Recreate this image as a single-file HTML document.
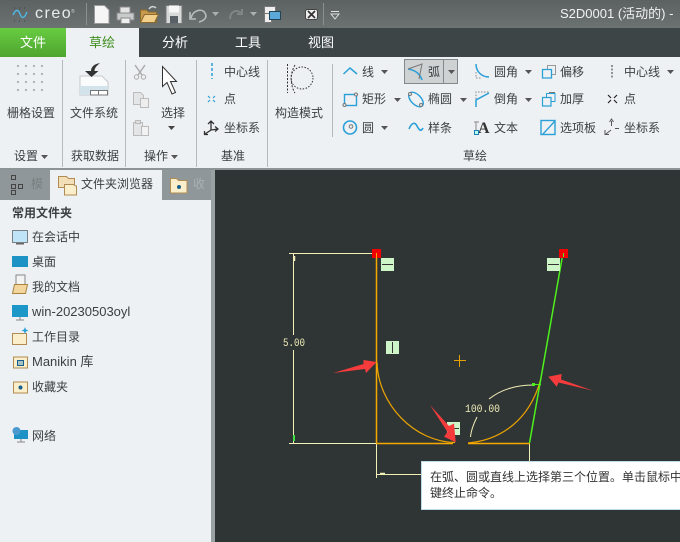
<!DOCTYPE html>
<html><head><meta charset="utf-8"><style>
html,body{margin:0;padding:0}
body{width:680px;height:542px;overflow:hidden;position:relative;background:#2f3535;font-family:"Liberation Sans","Noto Sans CJK SC",sans-serif;font-size:12px;color:#3b4042}
.a{position:absolute}
.t{position:absolute;white-space:nowrap;line-height:16px;height:16px}
.w{color:#fff;font-size:13px}
svg{position:absolute;left:0;top:0}
</style></head><body>
<div class="a" style="left:0;top:0;width:680px;height:28px;background:linear-gradient(#5c6262,#6c7272)"></div>
<div class="a" style="left:0;top:28px;width:680px;height:29px;background:#3d4547"></div>
<div class="a" style="left:0;top:28px;width:66px;height:29px;background:linear-gradient(#68cc42,#4ea52f)"></div>
<div class="a" style="left:66px;top:28px;width:73px;height:29px;background:#eef1f3"></div>
<div class="a" style="left:0;top:57px;width:680px;height:111px;background:#eef1f3"></div>
<div class="a" style="left:0;top:168px;width:680px;height:2px;background:#8d9496"></div>
<div class="a" style="left:0;top:170px;width:211px;height:372px;background:#eef1f3"></div>
<div class="a" style="left:211px;top:170px;width:4px;height:372px;background:#9aa1a3"></div>
<div class="a" style="left:0;top:170px;width:50px;height:30px;background:#90979a"></div>
<div class="a" style="left:162px;top:170px;width:49px;height:30px;background:#90979a"></div>
<div class="a" style="left:404px;top:59px;width:54px;height:25px;background:#cfd2d3;border:1px solid #83888a;box-sizing:border-box"></div>
<div class="a" style="left:443px;top:59px;width:1px;height:25px;background:#83888a"></div>

<span class="t" style="left:35px;top:6px;color:#e8ecec;font-size:16px;letter-spacing:1.5px">creo</span>
<span class="t" style="left:71px;top:9px;color:#ccc;font-size:5px;line-height:6px;height:6px">®</span>
<span class="t" style="left:560px;top:6px;color:#f2f2f2;font-size:13px">S2D0001 (活动的) -</span>
<span class="t w" style="left:20px;top:35px">文件</span>
<span class="t w" style="left:89px;top:35px;color:#3f8f1f">草绘</span>
<span class="t w" style="left:162px;top:35px">分析</span>
<span class="t w" style="left:235px;top:35px">工具</span>
<span class="t w" style="left:308px;top:35px">视图</span>

<span class="t" style="left:7px;top:105px">栅格设置</span>
<span class="t" style="left:70px;top:105px">文件系统</span>
<span class="t" style="left:161px;top:105px">选择</span>
<span class="t" style="left:224px;top:64px">中心线</span>
<span class="t" style="left:224px;top:91px">点</span>
<span class="t" style="left:224px;top:120px">坐标系</span>
<span class="t" style="left:275px;top:105px">构造模式</span>
<span class="t" style="left:14px;top:148px">设置</span>
<span class="t" style="left:71px;top:148px">获取数据</span>
<span class="t" style="left:144px;top:148px">操作</span>
<span class="t" style="left:221px;top:148px">基准</span>
<span class="t" style="left:463px;top:148px">草绘</span>

<span class="t" style="left:362px;top:64px">线</span>
<span class="t" style="left:428px;top:64px">弧</span>
<span class="t" style="left:494px;top:64px">圆角</span>
<span class="t" style="left:560px;top:64px">偏移</span>
<span class="t" style="left:624px;top:64px">中心线</span>
<span class="t" style="left:362px;top:91px">矩形</span>
<span class="t" style="left:428px;top:91px">椭圆</span>
<span class="t" style="left:494px;top:91px">倒角</span>
<span class="t" style="left:560px;top:91px">加厚</span>
<span class="t" style="left:624px;top:91px">点</span>
<span class="t" style="left:362px;top:120px">圆</span>
<span class="t" style="left:428px;top:120px">样条</span>
<span class="t" style="left:494px;top:120px">文本</span>
<span class="t" style="left:560px;top:120px">选项板</span>
<span class="t" style="left:624px;top:120px">坐标系</span>

<span class="t" style="left:31px;top:176px;color:#7a8082">模</span>
<span class="t" style="left:81px;top:176px">文件夹浏览器</span>
<span class="t" style="left:193px;top:176px;color:#aab0b2">收</span>
<span class="t" style="left:12px;top:205px;font-weight:bold">常用文件夹</span>
<span class="t" style="left:32px;top:229px">在会话中</span>
<span class="t" style="left:32px;top:254px">桌面</span>
<span class="t" style="left:32px;top:279px">我的文档</span>
<span class="t" style="left:32px;top:304px;font-size:13px">win-20230503oyl</span>
<span class="t" style="left:32px;top:329px">工作目录</span>
<span class="t" style="left:32px;top:354px;font-size:13px">Manikin 库</span>
<span class="t" style="left:32px;top:379px">收藏夹</span>
<span class="t" style="left:32px;top:428px">网络</span>

<svg width="680" height="542" viewBox="0 0 680 542" fill="none">
<!-- title bar icons -->
<path d="M13 15c3-6 5-6 7-1s4 5 7-2" stroke="#4fb8e8" stroke-width="1.400"/>
<path d="M14 8h1M19 8h1M24 8h1M14 21h1M19 21h1M24 21h1" stroke="#3c4242"/>
<path d="M86.500 3v22M323.500 3v22" stroke="#8b9090"/>
<path d="M94.500 5.500h10l4.500 4.500v13.500H94.500z" fill="#f6f6f6" stroke="#9a9a9a"/>
<path d="M120 7h10v6h-10z" fill="#e4e4e4" stroke="#888"/><path d="M117 13h17v7h-17z" fill="#c8cacb" stroke="#8a8a8a"/><path d="M121 18h9v5.500h-9z" fill="#eee" stroke="#888"/>
<path d="M140.500 22.500V10h6l2 2h8v10.500z" fill="#c89a4e" stroke="#8a6a2e"/><path d="M140.500 22.500l4-8h14l-4 8z" fill="#f3cf8c" stroke="#8a6a2e"/><path d="M149 9c2-3 5-3 7-1" stroke="#cfd2d2" stroke-width="1.500"/>
<path d="M166 5.500h16v18h-16z" fill="#d8dada" stroke="#777"/><path d="M169 5.500h10v7h-10z" fill="#f6f6f6"/><path d="M170 16h8v7.500h-8z" fill="#596066"/>
<path d="M190 12v7h6" stroke="#b8bcbc" stroke-width="1.600"/><path d="M191 18c2-8 11-10 14-5s-2 8-6 9" stroke="#b8bcbc" stroke-width="1.600"/>
<path d="M212 12h7l-3.500 4zM250 12h7l-3.500 4z" fill="#aab0b0"/>
<path d="M230 19c0-8 7-10 11-6M242 9v5h-5" stroke="#808686" stroke-width="2"/>
<path d="M264.500 6.500h11v7h-11zM264.500 13.500h7v9h-7z" fill="#eee" stroke="#777"/><rect x="269.500" y="11.500" width="11" height="8" fill="#5aa9d8" stroke="#245"/>
<rect x="305.500" y="9.500" width="12" height="10" rx="2" fill="#eee" stroke="#444"/><path d="M308 11l7 7M315 11l-7 7" stroke="#333" stroke-width="1.700"/>
<path d="M331 11.500h8M331 14h8l-4 5z" stroke="#e0e0e0"/>

<!-- ribbon separators -->
<path d="M62.500 60v107M125.500 60v107M196.500 60v107M267.500 60v107M332.500 64v73" stroke="#b5babb"/>
<!-- grid -->
<g fill="#555"><circle cx="18" cy="66" r=".7"/><circle cx="26" cy="66" r=".7"/><circle cx="34" cy="66" r=".7"/><circle cx="42" cy="66" r=".7"/><circle cx="18" cy="74" r=".7"/><circle cx="26" cy="74" r=".7"/><circle cx="34" cy="74" r=".7"/><circle cx="42" cy="74" r=".7"/><circle cx="18" cy="82" r=".7"/><circle cx="26" cy="82" r=".7"/><circle cx="34" cy="82" r=".7"/><circle cx="42" cy="82" r=".7"/><circle cx="18" cy="90" r=".7"/><circle cx="26" cy="90" r=".7"/><circle cx="34" cy="90" r=".7"/><circle cx="42" cy="90" r=".7"/></g>
<!-- file system -->
<path d="M80 76h22l6 6v13H80z" fill="#fafbfc" stroke="#c8c8c8"/><path d="M80 86h28v9H80z" fill="#d3e3ec"/><path d="M90.500 90.500h17v4.500h-17zM98.500 90.500v4.500" stroke="#777" fill="#fff"/>
<path d="M100 63c-6 1-9 4-9 8h-6l6.500 6 7-6h-4c0-3 2-5 5.500-8z" fill="#333"/>
<!-- scissors etc -->
<path d="M135 65l7 10M145 65l-7 10" stroke="#aaa" stroke-width="1.500"/><circle cx="136.500" cy="77" r="2.200" stroke="#aaa"/><circle cx="143.500" cy="77" r="2.200" stroke="#aaa"/>
<path d="M133.500 92.500h7l3 3v9h-10z" fill="#e3e5e6" stroke="#bbb"/><path d="M140.500 98.500h8v9h-8z" fill="#eee" stroke="#bbb"/>
<path d="M133.500 122.500h9v13h-9z" fill="#e3e5e6" stroke="#bbb"/><path d="M135.500 120.500h5v3h-5z" fill="#ddd" stroke="#bbb"/><path d="M141.500 126.500h7v9h-7z" fill="#f2f2f2" stroke="#bbb"/>
<path d="M162.500 66.500v20l4.500-4 5 11.500 3.500-1.500-5-11h6z" fill="#fff" stroke="#333"/>
<path d="M168 126h7l-3.500 4z" fill="#444"/>
<!-- group arrows -->
<path d="M41 155h7l-3.500 4zM171 155h7l-3.500 4z" fill="#555"/>
<!-- datum -->
<path d="M212 63v16" stroke="#2aa0d8" stroke-width="1.500" stroke-dasharray="3 2"/>
<path d="M208 96l2 2M215 96l-2 2M208 102l2-2M215 102l-2-2" stroke="#2aa0d8" stroke-width="1.200"/>
<path d="M211 121v9l-6 4M211 130l7-1M208 124l3-3 3 3M215 126.500l3 2.500-3 2.500M204.500 131v3.500h3.500" stroke="#333" stroke-width="1.300"/>
<!-- construction -->
<path d="M287.500 64v29" stroke="#333" stroke-dasharray="2 1.500"/><path d="M295 65c-5 8-5 20 0 28" stroke="#333" stroke-dasharray="2 1.500"/>
<circle cx="302" cy="78" r="11" stroke="#333" stroke-dasharray="1.500 1.500"/>
<!-- sketch icons row 1 -->
<path d="M343.500 74l6.500-6 7 6" stroke="#2aa0d8" stroke-width="1.500"/>
<path d="M381 70h7l-3.500 4zM394 98h7l-3.500 4zM381 126h7l-3.500 4zM448 70h7l-3.500 4zM525 70h7l-3.500 4zM460 98h7l-3.500 4zM525 98h7l-3.500 4zM667 70h7l-3.500 4z" fill="#555"/>
<path d="M408 69c7 1 12 5 14 11" stroke="#2aa0d8" stroke-width="1.600"/><path d="M408 69l14-5-3 15" stroke="#777"/>
<path d="M476 64c0 7 5 13 13 13" stroke="#2aa0d8" stroke-width="1.500"/><path d="M476 72v6h6" stroke="#888" stroke-dasharray="1.500 1.500"/>
<path d="M547.500 65.500h8v9h-8z" fill="#eef1f3" stroke="#999"/><path d="M542.500 69.500h9v8.500h-9z" stroke="#2aa0d8" fill="#eef1f3" stroke-width="1.300"/>
<path d="M612 65v14" stroke="#333" stroke-dasharray="2 1.500"/>
<!-- row 2 -->
<rect x="344.500" y="94.500" width="12" height="11" stroke="#2aa0d8" stroke-width="1.400"/><circle cx="344.500" cy="105" r="1.500" fill="#eee" stroke="#777"/><circle cx="356" cy="94.500" r="1.500" fill="#eee" stroke="#777"/>
<ellipse cx="416" cy="99.500" rx="9" ry="5" transform="rotate(45 416 99.500)" stroke="#2aa0d8" stroke-width="1.400"/><circle cx="410" cy="94" r="1.500" fill="#eee" stroke="#777"/><circle cx="421" cy="105" r="1.500" fill="#eee" stroke="#777"/>
<path d="M476 107v-7l13-7" stroke="#2aa0d8" stroke-width="1.500"/><path d="M476 99v-7h13" stroke="#888" stroke-dasharray="1.500 1.500"/>
<path d="M546.500 93.500h8.500v8h-8.500z" fill="#eef1f3" stroke="#2aa0d8"/><path d="M542.500 97.500h8.500v8.500h-8.500z" stroke="#2aa0d8" fill="#eef1f3" stroke-width="1.200"/><path d="M549 92.500h6" stroke="#777"/>
<path d="M608 95l3 3M617 95l-3 3M608 103l3-3M617 103l-3-3" stroke="#222" stroke-width="1.200"/>
<!-- row 3 -->
<circle cx="350" cy="127.500" r="6.500" stroke="#2aa0d8" stroke-width="1.600"/><circle cx="351" cy="126.500" r="1.800" stroke="#777"/>
<path d="M409 129c3-7 6-7 8-3s4 6 6 2" stroke="#2aa0d8" stroke-width="1.600"/>
<text x="478" y="133" font-family="Liberation Serif" font-weight="bold" font-size="16" fill="#333">A</text><path d="M474 122h5M476 122v8" stroke="#888"/><rect x="474.500" y="130.500" width="4" height="4" stroke="#1b80b8" fill="#bfe"/>
<rect x="541" y="120.500" width="14" height="14" stroke="#2aa0d8" stroke-width="1.400"/><path d="M543 134l12-13" stroke="#2aa0d8" stroke-width="1.400"/>
<path d="M611.500 126v-5M609.500 122l2-3 2 3M611 130l-5 4M605 130v4.500h4M615 128.500h4" stroke="#555"/>

<!-- panel tabs -->
<g stroke="#444" fill="none"><rect x="11.500" y="175.500" width="4" height="4"/><rect x="11.500" y="184.500" width="4" height="4"/><rect x="11.500" y="190.500" width="4" height="4"/><rect x="18.500" y="184.500" width="4" height="4"/></g>
<path d="M58.500 176.500h8l2 2h6v9h-16z" fill="#f2dfb8" stroke="#b18c52"/><path d="M64.500 184.500h9l2 1.500h1v9h-12z" fill="#fbeecb" stroke="#b18c52"/>
<path d="M170.500 178.500h6l2 2h8.500v12.500h-16.500z" fill="#fbeecb" stroke="#b18c52"/><circle cx="179" cy="187" r="2" fill="#1a5f8c"/>

<!-- folder list icons -->
<rect x="12.500" y="230.500" width="15" height="12" fill="#bfe4f7" stroke="#7a8085"/><path d="M16 243h8v1.500h-8z" fill="#666"/>
<rect x="12" y="256" width="16" height="11" fill="#1c93c4"/>
<path d="M16 287v-12h9v10" fill="#f3f3f3" stroke="#888"/><path d="M12.500 293.500l2-9h13l-2 9z" fill="#f2d69e" stroke="#a8843c"/>
<rect x="12" y="305" width="16" height="12" fill="#1c98c8"/><path d="M20 317v3M16 320h8" stroke="#888"/>
<path d="M12.500 333.500h14v11h-14z" fill="#fbeecb" stroke="#b18c52"/><path d="M25 327l1 2.500 2.500 1-2.500 1-1 2.500-1-2.500-2.500-1 2.500-1z" fill="#2aa0d8"/>
<rect x="13.500" y="357" width="14" height="11" fill="#fbeecb" stroke="#b18c52"/><rect x="17.500" y="360.500" width="6" height="5" stroke="#1a5f8c" fill="#2a80b0" fill-opacity=".4"/>
<rect x="13.500" y="382" width="14" height="11" fill="#fbeecb" stroke="#b18c52"/><circle cx="20.500" cy="387.500" r="2" fill="#1a5f8c"/>
<rect x="14" y="430" width="14" height="9" fill="#1c93c4"/><circle cx="16.500" cy="431" r="4" fill="#4a9ad0"/><path d="M21 439v3M17 442h8" stroke="#888"/>

<!-- sketch -->
<g stroke="#f2efb8" stroke-width="1">
<path d="M289 253.500h87M289 443.500h87M293.500 253v82M293.500 350v93M376.500 443v35M529.500 443v20M376 474.500h46"/>
<path d="M489 399c14-11 29-14 44-14M477 417c-3 6-6 13-6.500 20"/>
</g>
<path d="M294.500 256v5M380 473.500h5" stroke="#f2efb8" stroke-width="1.500"/>
<path d="M294 435v6" stroke="#3fe03f" stroke-width="2"/>
<path d="M376.500 253v190M376 443.500h77M468 443.500h62" stroke="#f7a800" stroke-width="1.500"/>
<path d="M377 362c1 43 38 80 78 80.500M468 443c32-3 62-22 73-65" stroke="#eca400" stroke-width="1.200"/>
<path d="M529.500 443L563 253" stroke="#4ef01e" stroke-width="1.500"/>
<path d="M533 384.500h8" stroke="#4ef01e"/><rect x="532" y="383" width="3" height="3" fill="#4ef01e"/>
<rect x="372" y="249" width="9" height="9" fill="#f00000"/><rect x="559" y="249" width="9" height="9" fill="#f00000"/>
<path d="M376.500 253v5" stroke="#f7a800"/><path d="M563.500 253v4" stroke="#4ef01e"/>
<g fill="#cdf5c8">
<rect x="381" y="258" width="13" height="13"/><rect x="547" y="258" width="13" height="13"/><rect x="386" y="341" width="13" height="13"/><rect x="447" y="422" width="13" height="13"/>
</g>
<path d="M382 264.500h11M548 264.500h11M392.500 342v11M448 428.500h11" stroke="#333"/>
<path d="M454 360.500h12M459.500 355v12" stroke="#e8a000"/>
<text x="283" y="346" font-family="Liberation Mono" font-size="11" textLength="22" lengthAdjust="spacingAndGlyphs" fill="#f2efb8">5.00</text>
<text x="465" y="412" font-family="Liberation Mono" font-size="11" textLength="35" lengthAdjust="spacingAndGlyphs" fill="#f2efb8">100.00</text>
<g fill="#f53b3b">
<path d="M333 373L363.500 364L363.500 360L376.700 362L366 373L365 369Z"/>
<path d="M430 405L449 426L454 423.500L455.700 442.300L444 436.700L447.500 432Z"/>
<path d="M593.300 390.700L561 379.500L561.700 374L548.300 376.700L556.700 386.700L558.500 382.500Z"/>
</g>
</svg>
<div class="a" style="left:421px;top:461px;width:259px;height:49px;background:#fff;border:1px solid #bcdcec;border-right:0;box-sizing:border-box"></div>
<span class="t" style="left:430px;top:469px;color:#333">在弧、圆或直线上选择第三个位置。单击鼠标中</span>
<span class="t" style="left:430px;top:485px;color:#333">键终止命令。</span>
</body></html>
